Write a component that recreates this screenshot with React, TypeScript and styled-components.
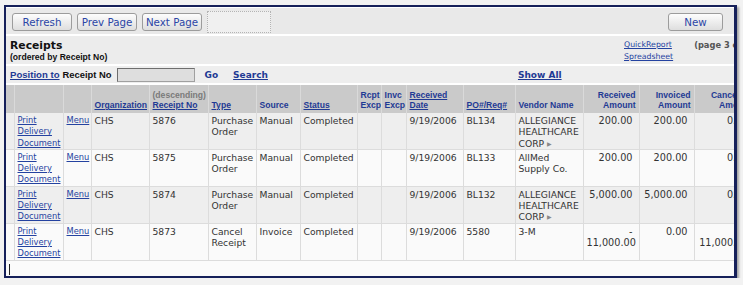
import styled, { createGlobalStyle } from 'styled-components';

const GlobalStyle = createGlobalStyle`
  html, body {
    margin: 0;
    padding: 0;
    background: #f2f2f2;
  }
  body {
    font-family: "DejaVu Sans", Verdana, sans-serif;
    color: #333;
  }
`;

const Frame = styled.div`
  margin: 5px 0 0 4px;
  width: 728px;
  height: 268px;
  border: 2px solid #16205a;
  border-right-width: 3px;
  box-shadow: 2px 2px 2px #a4a4a4;
  background: #fff;
  overflow: hidden;
  display: flex;
  flex-direction: column;
  padding-top: 1px;
  box-sizing: content-box;
`;

const Toolbar = styled.div`
  flex-shrink: 0;
  height: 25px;
  display: flex;
  align-items: center;
  gap: 5px;
  padding: 1px 11px 0 6px;
  background: #e9e9e9;
  border-bottom: 2px solid #fff;
`;

const Button = styled.button<{ $w: number }>`
  width: ${p => p.$w}px;
  height: 18px;
  padding: 0;
  border: 1px solid #9c9c9c;
  border-radius: 3px;
  background: linear-gradient(#fdfdfd, #dedede);
  color: #2b45a6;
  font-family: "DejaVu Sans", Verdana, sans-serif;
  font-size: 10.3px;
`;

const Spacer = styled.div`
  width: 62px;
  height: 20px;
  border: 1px dotted #b4b4b4;
  background: #f0f0f0;
`;

const Fill = styled.div`
  flex: 1;
`;

const TitleBar = styled.div`
  flex-shrink: 0;
  height: 28px;
  display: flex;
  padding: 0 0 0 4px;
  background: #ececec;
  border-bottom: 2px solid #fff;
`;

const TitleBlock = styled.div`
  flex: 1;
  padding-top: 3px;
`;

const Title = styled.div`
  font-size: 10.8px;
  font-weight: bold;
  color: #111;
  line-height: 13px;
`;

const SubTitle = styled.div`
  font-family: "Liberation Sans", Arial, sans-serif;
  font-size: 8.6px;
  font-weight: bold;
  color: #111;
  line-height: 11px;
`;

const Reports = styled.div`
  flex-shrink: 0;
  width: 110px;
  display: flex;
  gap: 21px;
  padding-top: 4px;
`;

const ReportLinks = styled.div`
  display: flex;
  flex-direction: column;
  gap: 2px;
`;

const SmallLink = styled.a`
  font-size: 7.8px;
  line-height: 10px;
  color: #2442a0;
  text-decoration: underline;
`;

const PageInfo = styled.span`
  font-size: 8.3px;
  font-weight: bold;
  color: #555;
  line-height: 10px;
  white-space: nowrap;
`;

const SearchRow = styled.div`
  flex-shrink: 0;
  height: 17px;
  display: flex;
  align-items: center;
  padding: 0 4px;
  background: #eeeeee;
  border-bottom: 2px solid #fff;
`;

const BoldLink = styled.a<{ $ml?: number; $plain?: boolean }>`
  margin-left: ${p => p.$ml ?? 0}px;
  font-size: 9px;
  font-weight: bold;
  color: #1f3a94;
  text-decoration: ${p => (p.$plain ? 'none' : 'underline')};
`;

const TahomaLink = styled(BoldLink)`
  font-family: "Liberation Sans", Arial, sans-serif;
  font-size: 9.6px;
`;

const Label = styled.span`
  margin-left: 3px;
  font-family: "Liberation Sans", Arial, sans-serif;
  font-size: 9.4px;
  font-weight: bold;
  color: #111;
`;

const SearchInput = styled.input`
  margin-left: 5px;
  width: 76px;
  height: 12px;
  padding: 0;
  border: 1px solid #a0a0a0;
  border-top-color: #6e6e6e;
  border-left-color: #6e6e6e;
  background: #dedede;
`;

const Table = styled.table`
  flex-shrink: 0;
  width: 749px;
  table-layout: fixed;
  border-collapse: collapse;
`;

const HeadRow = styled.tr`
  height: 28px;
`;

const Th = styled.th<{ $right?: boolean }>`
  padding: 0 3px 3px;
  vertical-align: bottom;
  text-align: ${p => (p.$right ? 'right' : 'left')};
  background: #cacaca;
  border-right: 1px solid #dadada;
  font-family: "Liberation Sans", Arial, sans-serif;
  font-size: 8.6px;
  line-height: 10px;
  font-weight: bold;
  color: #1f3a94;
  overflow: hidden;
  white-space: nowrap;
`;

const HeadLink = styled.span`
  text-decoration: underline;
`;

const Descending = styled.div`
  color: #7a7a7a;
`;

const Tr = styled.tr<{ $shade: boolean }>`
  height: 36px;
  background: ${p => (p.$shade ? '#eeeeee' : '#fafafa')};
`;

const Td = styled.td<{ $amount?: boolean }>`
  padding: 2px ${p => (p.$amount ? 6 : 3)}px 0 3px;
  vertical-align: top;
  text-align: ${p => (p.$amount ? 'right' : 'left')};
  border-right: 1px solid #dcdcdc;
  border-bottom: 1px solid #dcdcdc;
  font-size: ${p => (p.$amount ? 9.7 : 9.2)}px;
  line-height: 11.3px;
  color: #333;
  white-space: pre-line;
  overflow: hidden;
`;

const CellLink = styled.a`
  display: block;
  font-size: 8.3px;
  line-height: 11.3px;
  color: #2442a0;
  text-decoration: underline;
  white-space: pre-line;
`;

const Arrow = styled.span`
  font-size: 6px;
  vertical-align: 1px;
  color: #888;
  margin-left: 3px;
`;

const Bottom = styled.div`
  flex: 1;
  background: #fbfbfb;
  padding: 3px 0 0 3px;
`;

const Caret = styled.div`
  width: 1px;
  height: 11px;
  background: #222;
`;

const cols = [8, 49, 28, 58, 59, 48, 44, 57, 24, 25, 57, 52, 68, 56, 55, 61];

type Head = { label: string; link?: boolean; right?: boolean; sub?: string };

const heads: Head[] = [
  { label: '' },
  { label: '' },
  { label: '' },
  { label: 'Organization', link: true },
  { label: 'Receipt No', link: true, sub: '(descending)' },
  { label: 'Type', link: true },
  { label: 'Source' },
  { label: 'Status', link: true },
  { label: 'Rcpt\nExcp' },
  { label: 'Invc\nExcp' },
  { label: 'Received\nDate', link: true },
  { label: 'PO#/Req#', link: true },
  { label: 'Vendor Name' },
  { label: 'Received\nAmount', right: true },
  { label: 'Invoiced\nAmount', right: true },
  { label: 'Cancelled\nAmount', right: true },
];

type Row = {
  no: string;
  type: string;
  source: string;
  po: string;
  vendor: string;
  more?: boolean;
  received: string;
  invoiced: string;
  cancel: string;
};

const rows: Row[] = [
  { no: '5876', type: 'Purchase\nOrder', source: 'Manual', po: 'BL134', vendor: 'ALLEGIANCE\nHEALTHCARE\nCORP', more: true, received: '200.00', invoiced: '200.00', cancel: '0.00' },
  { no: '5875', type: 'Purchase\nOrder', source: 'Manual', po: 'BL133', vendor: 'AllMed\nSupply Co.', received: '200.00', invoiced: '200.00', cancel: '0.00' },
  { no: '5874', type: 'Purchase\nOrder', source: 'Manual', po: 'BL132', vendor: 'ALLEGIANCE\nHEALTHCARE\nCORP', more: true, received: '5,000.00', invoiced: '5,000.00', cancel: '0.00' },
  { no: '5873', type: 'Cancel\nReceipt', source: 'Invoice', po: '5580', vendor: '3-M', received: '-\n11,000.00', invoiced: '0.00', cancel: '-\n11,000.00' },
];

function HeadLabel({ h }: { h: Head }) {
  const lines = h.label.split('\n');
  const body = lines.map((l, i) => (
    <div key={i}>{h.link ? <HeadLink>{l}</HeadLink> : l}</div>
  ));
  return (
    <>
      {h.sub && <Descending>{h.sub}</Descending>}
      {body}
    </>
  );
}

export default function App() {
  return (
    <>
      <GlobalStyle />
      <Frame>
        <Toolbar>
          <Button $w={60}>Refresh</Button>
          <Button $w={60}>Prev Page</Button>
          <Button $w={60}>Next Page</Button>
          <Spacer />
          <Fill />
          <Button $w={55}>New</Button>
        </Toolbar>

        <TitleBar>
          <TitleBlock>
            <Title>Receipts</Title>
            <SubTitle>(ordered by Receipt No)</SubTitle>
          </TitleBlock>
          <Reports>
            <ReportLinks>
              <SmallLink>QuickReport</SmallLink>
              <SmallLink>Spreadsheet</SmallLink>
            </ReportLinks>
            <PageInfo>(page 3 of 3)</PageInfo>
          </Reports>
        </TitleBar>

        <SearchRow>
          <TahomaLink>Position to</TahomaLink>
          <Label>Receipt No</Label>
          <SearchInput />
          <BoldLink $ml={10} $plain>Go</BoldLink>
          <BoldLink $ml={15}>Search</BoldLink>
          <BoldLink $ml={250}>Show All</BoldLink>
        </SearchRow>

        <Table>
          <colgroup>
            {cols.map((w, i) => (
              <col key={i} style={{ width: w }} />
            ))}
          </colgroup>
          <thead>
            <HeadRow>
              {heads.map((h, i) => (
                <Th key={i} $right={h.right}>
                  <HeadLabel h={h} />
                </Th>
              ))}
            </HeadRow>
          </thead>
          <tbody>
            {rows.map((r, i) => (
              <Tr key={r.no} $shade={i % 2 === 0}>
                <Td />
                <Td>
                  <CellLink>{'Print\nDelivery\nDocument'}</CellLink>
                </Td>
                <Td>
                  <CellLink>Menu</CellLink>
                </Td>
                <Td>CHS</Td>
                <Td>{r.no}</Td>
                <Td>{r.type}</Td>
                <Td>{r.source}</Td>
                <Td>Completed</Td>
                <Td />
                <Td />
                <Td>9/19/2006</Td>
                <Td>{r.po}</Td>
                <Td>
                  {r.vendor}
                  {r.more && <Arrow>▶</Arrow>}
                </Td>
                <Td $amount>{r.received}</Td>
                <Td $amount>{r.invoiced}</Td>
                <Td $amount>{r.cancel}</Td>
              </Tr>
            ))}
          </tbody>
        </Table>

        <Bottom>
          <Caret />
        </Bottom>
      </Frame>
    </>
  );
}
